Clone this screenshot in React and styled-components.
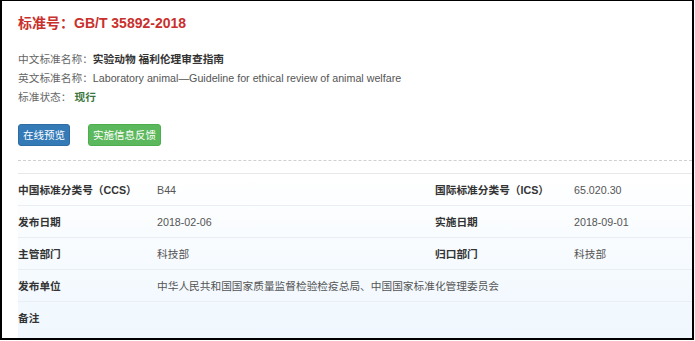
import React from 'react';
import styled, { createGlobalStyle } from 'styled-components';

const GlobalStyle = createGlobalStyle`
  html, body {
    margin: 0;
    padding: 0;
    background: #fff;
  }
  body {
    font-family: "Liberation Sans", "Noto Sans CJK SC", Arial, sans-serif;
  }
`;

const info = {
  code: 'GB/T 35892-2018',
  cnName: '实验动物 福利伦理审查指南',
  enName: 'Laboratory animal—Guideline for ethical review of animal welfare',
  status: '现行',
};

const rows = [
  [['中国标准分类号（CCS）', 'B44'], ['国际标准分类号（ICS）', '65.020.30']],
  [['发布日期', '2018-02-06'], ['实施日期', '2018-09-01']],
  [['主管部门', '科技部'], ['归口部门', '科技部']],
  [['发布单位', '中华人民共和国国家质量监督检验检疫总局、中国国家标准化管理委员会']],
  [['备注', '']],
];

const Frame = styled.div`
  box-sizing: border-box;
  width: 694px;
  height: 340px;
  border: 2px solid #000;
  border-top-width: 1px;
  padding: 13px 0 0 16px;
  overflow: hidden;
`;

const Title = styled.h1`
  margin: 0;
  font-size: 14px;
  line-height: 18px;
  font-weight: bold;
  color: #c9302c;
`;

const InfoList = styled.div`
  margin-top: 18px;
  display: flex;
  flex-direction: column;
`;

const InfoLine = styled.div`
  font-size: 10.7px;
  line-height: 19px;
  color: #666;
`;

const InfoValue = styled.span`
  color: ${p => p.$color || '#333'};
  font-weight: ${p => (p.$bold ? 'bold' : 'normal')};
  margin-left: ${p => p.$gap || 0}px;
`;

const Actions = styled.div`
  display: flex;
  gap: 18px;
  margin-top: 17px;
`;

const Button = styled.button`
  height: 22px;
  padding: 0 4px;
  border: 1px solid ${p => p.$border};
  border-radius: 3px;
  background: ${p => p.$bg};
  color: #fff;
  font-family: inherit;
  font-size: 10.5px;
  line-height: 20px;
  cursor: pointer;
`;

const Divider = styled.div`
  margin-top: 14px;
  border-top: 1px dashed #d0d0d0;
`;

const Table = styled.div`
  margin-top: 12px;
  border-top: 1px solid #e8e8e8;
  background: linear-gradient(to bottom, #ffffff 0%, #f1f8fe 70%, #eef6fd 100%);
  height: 200px;
`;

const Row = styled.div`
  display: grid;
  grid-template-columns: 139px 278px 139px 1fr;
  align-items: center;
  height: 31px;
  border-bottom: 1px solid ${p => (p.$last ? 'transparent' : '#e8eef3')};
  font-size: 10.7px;
`;

const Label = styled.div`
  font-weight: bold;
  color: #333;
`;

const Value = styled.div`
  color: #555;
  grid-column: ${p => (p.$wide ? 'span 3' : 'auto')};
  white-space: nowrap;
`;

export default function App() {
  return (
    <>
      <GlobalStyle />
      <Frame>
        <Title>标准号：{info.code}</Title>
        <InfoList>
          <InfoLine>
            中文标准名称：<InfoValue $bold>{info.cnName}</InfoValue>
          </InfoLine>
          <InfoLine>
            英文标准名称：<InfoValue $color="#555">{info.enName}</InfoValue>
          </InfoLine>
          <InfoLine>
            标准状态：<InfoValue $bold $color="#3c763d" $gap={3}>{info.status}</InfoValue>
          </InfoLine>
        </InfoList>
        <Actions>
          <Button $bg="#337ab7" $border="#2e6da4">在线预览</Button>
          <Button $bg="#5cb85c" $border="#4cae4c">实施信息反馈</Button>
        </Actions>
        <Divider />
        <Table>
          {rows.map((cells, i) => (
            <Row key={i} $last={i === rows.length - 1}>
              {cells.map(([label, value]) => (
                <React.Fragment key={label}>
                  <Label>{label}</Label>
                  <Value $wide={cells.length === 1}>{value}</Value>
                </React.Fragment>
              ))}
            </Row>
          ))}
        </Table>
      </Frame>
    </>
  );
}
